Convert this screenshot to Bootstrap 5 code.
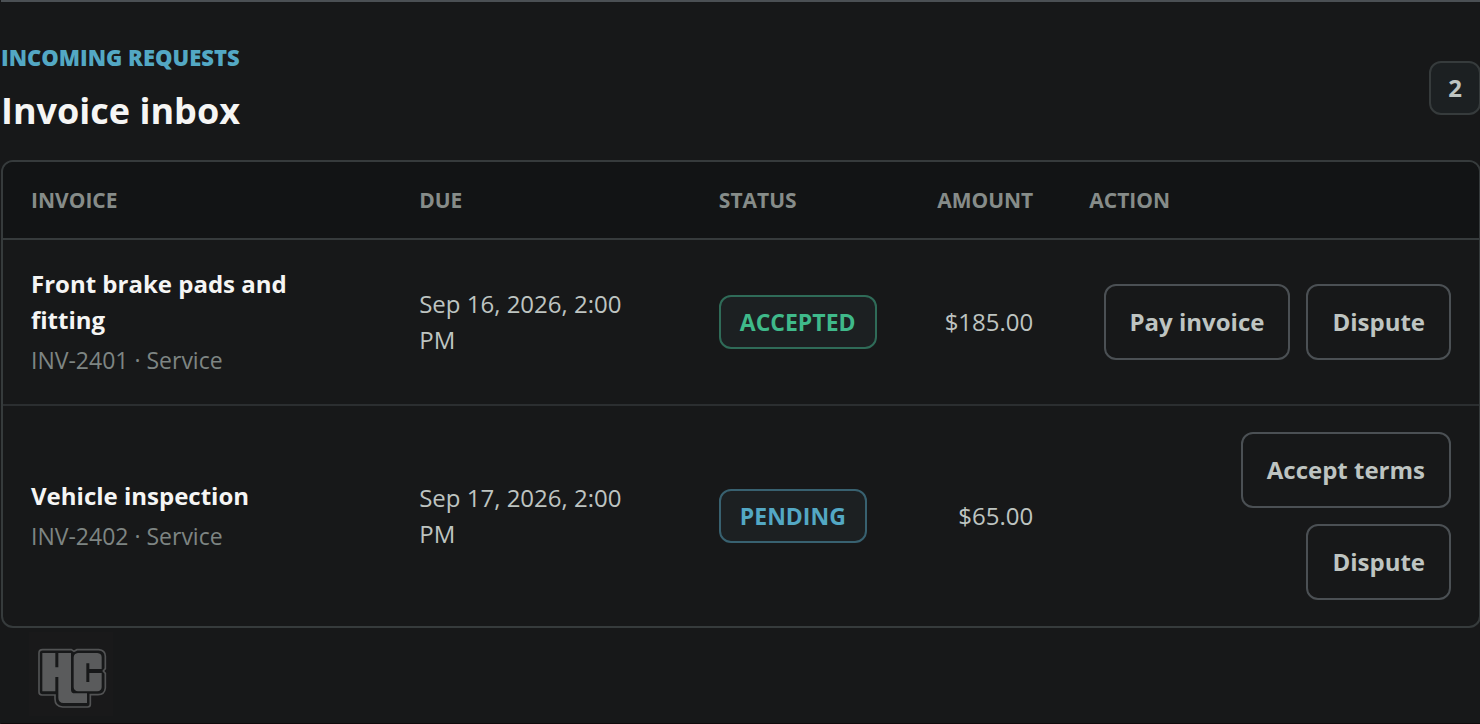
<!DOCTYPE html>
<html lang="en" data-bs-theme="dark">
<head>
<meta charset="utf-8">
<meta name="viewport" content="width=device-width, initial-scale=1">
<title>Invoice inbox</title>
<link href="https://cdn.jsdelivr.net/npm/bootstrap@5.3.0/dist/css/bootstrap.min.css" rel="stylesheet">
<style>
  body { background: #171819; color: #bec4c1; font-family: "Open Sans", "Noto Sans", sans-serif; font-size: 24px; line-height: 36px; overflow-x: hidden; }
  .inbox { margin: 0 -1px 0 1px; border-top: 2px solid #4b5054; border-bottom: 1px solid #100a0b; padding-top: 39px; }
  .eyebrow { color: #53a8c4; font-size: 22px; line-height: 32px; font-weight: 800; }
  .inbox-title { color: #f5f5f4; font-size: 36px; line-height: 48px; font-weight: 700; margin: 14px 0 0; }
  .count-pill { background: #1c2022; border: 2px solid #363b3c; border-radius: 12px; padding: 7px 17px; font-weight: 700; }
  .inbox-frame { border: 2px solid #363b3c; border-radius: 12px; margin-top: 25px; overflow: hidden; }
  .inbox-table { width: 100%; table-layout: fixed; border-collapse: separate; border-spacing: 0; }
  .inbox-table th, .inbox-table td { padding: 26px 28px; vertical-align: middle; }
  .inbox-table th { background: #121415; color: #868c89; font-size: 21px; line-height: 32px; font-weight: 700; padding: 22px 28px; border-bottom: 2px solid #363b3c; }
  .inbox-table tbody tr + tr td { border-top: 2px solid #2b2e30; }
  .c-invoice { width: 26.3%; } .c-due { width: 20.3%; } .c-status { width: 14.6%; } .c-amount { width: 10.5%; }
  .item-name { color: #f5f5f4; font-weight: 700; }
  .item-ref { color: #7e8583; font-size: 23px; margin-top: 4px; }
  .state { display: block; width: fit-content; background: #1c2022; border: 2px solid; border-radius: 12px; padding: 7px 19px; font-size: 23px; font-weight: 700; }
  .state-accepted { color: #3fb98a; border-color: #2f6b58; }
  .state-pending { color: #53a8c4; border-color: #386170; }
  .btn-line { --bs-btn-color: #bec4c1; --bs-btn-border-color: #4b5054; --bs-btn-hover-color: #f5f5f4; --bs-btn-hover-border-color: #7e8583; --bs-btn-border-width: 2px; --bs-btn-border-radius: 12px; --bs-btn-padding-x: 24px; --bs-btn-padding-y: 18px; --bs-btn-font-size: 24px; --bs-btn-line-height: 36px; --bs-btn-font-weight: 700; }
  .brand { display: block; width: 84px; height: 84px; margin: 4px 0 0 28px; }
</style>
</head>
<body>
<main class="inbox min-vh-100">
  <header class="d-flex justify-content-between align-items-center">
    <div>
      <div class="eyebrow">INCOMING REQUESTS</div>
      <h1 class="inbox-title">Invoice inbox</h1>
    </div>
    <span class="count-pill">2</span>
  </header>
  <div class="inbox-frame">
    <table class="inbox-table">
      <thead>
        <tr><th class="c-invoice">INVOICE</th><th class="c-due">DUE</th><th class="c-status">STATUS</th><th class="c-amount text-end">AMOUNT</th><th>ACTION</th></tr>
      </thead>
      <tbody>
        <tr>
          <td><div class="item-name">Front brake pads and fitting</div><div class="item-ref">INV-2401 · Service</div></td>
          <td>Sep 16, 2026, 2:00<br>PM</td>
          <td><span class="state state-accepted">ACCEPTED</span></td>
          <td class="text-end">$185.00</td>
          <td><div class="d-flex flex-wrap justify-content-end gap-3"><button type="button" class="btn btn-line">Pay invoice</button><button type="button" class="btn btn-line">Dispute</button></div></td>
        </tr>
        <tr>
          <td><div class="item-name">Vehicle inspection</div><div class="item-ref">INV-2402 · Service</div></td>
          <td>Sep 17, 2026, 2:00<br>PM</td>
          <td><span class="state state-pending">PENDING</span></td>
          <td class="text-end">$65.00</td>
          <td><div class="d-flex flex-wrap justify-content-end gap-3"><button type="button" class="btn btn-line">Accept terms</button><button type="button" class="btn btn-line">Dispute</button></div></td>
        </tr>
      </tbody>
    </table>
  </div>
  <svg class="brand" viewBox="87 36 252 252" role="img" aria-label="HLC logo">
    <rect x="87" y="36" width="252" height="252" fill="#19191a"/>
    <!-- outer contour -->
    <path fill="#171819" stroke="#525354" stroke-width="5" d="M128 89H214L222 94L231 89H296Q316 91 316 109V146L310 153L316 160V204Q314 224 294 224H271V253Q271 261 263 261H188Q165 259 165 237V225H126Q117 225 117 216V99Q117 89 128 89Z"/>
    <!-- interlocking blocks -->
    <g fill="#5a5b5c">
      <path d="M127 99H166V142H175V99H213V209Q213 220 224 220H261V249H191Q175 248 175 233V171H166V214H127Z"/>
      <path d="M234 99H292Q305 100 305 112V147H268V130H259V186H268V159H305V202Q304 213 292 214H234Q222 213 221 202V112Q222 100 234 99Z"/>
    </g>
  </svg>
</main>
<script src="https://cdn.jsdelivr.net/npm/bootstrap@5.3.0/dist/js/bootstrap.bundle.min.js"></script>
</body>
</html>
